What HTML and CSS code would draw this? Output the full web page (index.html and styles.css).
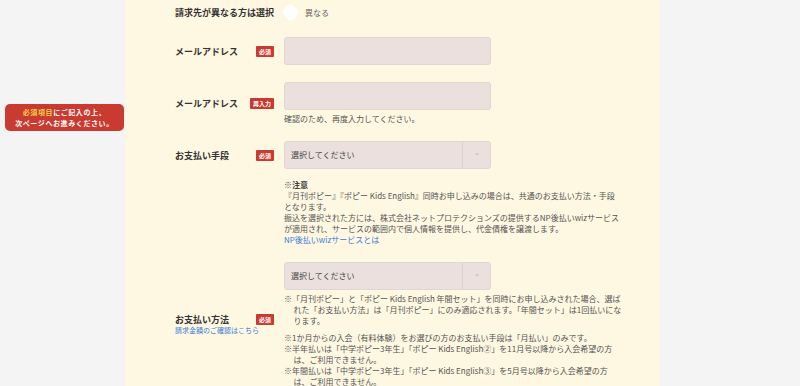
FILE: index.html
```html
<!DOCTYPE html>
<html lang="ja">
<head>
  <meta charset="UTF-8" />
  <meta name="viewport" content="width=device-width, initial-scale=1.0" />
  <title>お申し込みフォーム</title>
  <link rel="stylesheet" href="styles.css">
</head>
<body>
  <div class="notice"><span class="hl">必須項目</span>にご記入の上、<br>次ページへお進みください。</div>

  <main class="panel">
    <div class="row row-radio">
      <div class="label"><div class="name-line"><span class="name">請求先が異なる方は選択</span></div></div>
      <div class="field">
        <label class="radio"><span class="dot"></span>異なる</label>
      </div>
    </div>

    <div class="row">
      <div class="label"><div class="name-line"><span class="name">メールアドレス</span><span class="badge">必須</span></div></div>
      <div class="field"><input type="email" class="input" /></div>
    </div>

    <div class="row">
      <div class="label"><div class="name-line"><span class="name">メールアドレス</span><span class="badge">再入力</span></div></div>
      <div class="field">
        <input type="email" class="input" />
        <p class="hint">確認のため、再度入力してください。</p>
      </div>
    </div>

    <div class="row">
      <div class="label"><div class="name-line"><span class="name">お支払い手段</span><span class="badge">必須</span></div></div>
      <div class="field">
        <div class="select"><span class="select-text">選択してください</span><span class="select-arrow">&#8964;</span></div>
      </div>
    </div>

    <div class="row row-notes">
      <div class="label"></div>
      <div class="field notes">
        <p><strong>※注意</strong><br>
        『月刊ポピー』『ポピー Kids English』同時お申し込みの場合は、共通のお支払い方法・手段<br>
        となります。<br>
        振込を選択された方には、株式会社ネットプロテクションズの提供するNP後払いwizサービス<br>
        が適用され、サービスの範囲内で個人情報を提供し、代金債権を譲渡します。<br>
        <a href="#np" class="link">NP後払いwizサービスとは</a></p>
      </div>
    </div>

    <div class="row">
      <div class="label">
        <div class="name-line"><span class="name">お支払い方法</span><span class="badge">必須</span></div>
        <a href="#price" class="sub-link">請求金額のご確認はこちら</a>
      </div>
      <div class="field">
        <div class="select"><span class="select-text">選択してください</span><span class="select-arrow">&#8964;</span></div>
        <div class="notes notes-tight">
          <p class="mark">※「月刊ポピー」と「ポピー Kids English 年間セット」を同時にお申し込みされた場合、選ば<br>れた「お支払い方法」は「月刊ポピー」にのみ適応されます。「年間セット」は1回払いにな<br>ります。</p>
          <p class="mark gap">※1か月からの入会（有料体験）をお選びの方のお支払い手段は「月払い」のみです。</p>
          <p class="mark">※半年払いは「中学ポピー3年生」「ポピー Kids English②」を11月号以降から入会希望の方<br>は、ご利用できません。</p>
          <p class="mark">※年間払いは「中学ポピー3年生」「ポピー Kids English③」を5月号以降から入会希望の方<br>は、ご利用できません。</p>
        </div>
      </div>
    </div>
  </main>
</body>
</html>
```

FILE: styles.css
```css
:root {
  --page-bg: #f4f4f4;
  --panel-bg: #fef7e1;
  --red: #c93a30;
  --input-bg: #ebe0de;
  --input-border: #e2d6d3;
  --text: #333333;
  --note: #555555;
  --link: #3b7dd8;
}

* {
  box-sizing: border-box;
  margin: 0;
  padding: 0;
}

body {
  font-family: "Noto Sans CJK JP", "Noto Sans", sans-serif;
  background-color: var(--page-bg);
  color: var(--text);
  height: 386px;
  overflow: hidden;
}

.notice {
  position: fixed;
  left: 5px;
  top: 104px;
  width: 119px;
  height: 27px;
  padding-top: 3px;
  background-color: var(--red);
  border-radius: 5px;
  color: #fff;
  font-size: 7px;
  font-weight: bold;
  letter-spacing: 0.6px;
  line-height: 11px;
  text-align: center;
}

.notice .hl {
  color: #f6d24a;
}

.panel {
  width: 535px;
  min-height: 386px;
  margin-left: 125px;
  padding: 5px 0 0 50px;
  background-color: var(--panel-bg);
}

.row {
  display: grid;
  grid-template-columns: 109px 1fr;
  align-items: center;
  margin-bottom: 17px;
}

.row-notes {
  margin-top: -7px;
}

.label {
  padding-right: 10px;
}

.name-line {
  display: flex;
  justify-content: space-between;
  align-items: center;
}

.name {
  font-size: 9px;
  font-weight: bold;
  line-height: 11px;
  white-space: nowrap;
}

.badge {
  background-color: var(--red);
  color: #fff;
  font-size: 6px;
  font-weight: bold;
  line-height: 11px;
  padding: 0 3px;
  border-radius: 1px;
  white-space: nowrap;
}

.sub-link {
  display: block;
  color: var(--link);
  font-size: 7px;
  line-height: 10px;
  text-decoration: none;
  white-space: nowrap;
}

.field {
  min-width: 0;
}

.radio {
  display: flex;
  align-items: center;
  gap: 7px;
  height: 15px;
  font-size: 8px;
  color: #666;
}

.dot {
  width: 15px;
  height: 15px;
  margin-left: -1px;
  border-radius: 50%;
  background-color: #fff;
}

.input {
  display: block;
  width: 207px;
  height: 28px;
  background-color: var(--input-bg);
  border: 1px solid var(--input-border);
  border-radius: 3px;
  outline: none;
}

.hint {
  margin-top: 3px;
  font-size: 8px;
  line-height: 11px;
  color: var(--note);
}

.select {
  display: flex;
  width: 207px;
  height: 28px;
  background-color: var(--input-bg);
  border: 1px solid var(--input-border);
  border-radius: 3px;
  font-size: 8px;
}

.select-text {
  flex: 1;
  padding-left: 6px;
  line-height: 26px;
  color: #444;
}

.select-arrow {
  width: 28px;
  border-left: 1px solid #ddd1ce;
  color: #b5aaa8;
  font-size: 7px;
  line-height: 20px;
  text-align: center;
}

.notes {
  font-size: 8px;
  line-height: 11px;
  color: var(--note);
  white-space: nowrap;
}

.notes strong {
  color: #444;
}

.notes-tight {
  margin-top: 3px;
}

.link {
  color: var(--link);
  text-decoration: none;
}

.mark {
  padding-left: 1.2em;
  text-indent: -1.2em;
}

.mark.gap {
  margin-top: 6px;
}
```
